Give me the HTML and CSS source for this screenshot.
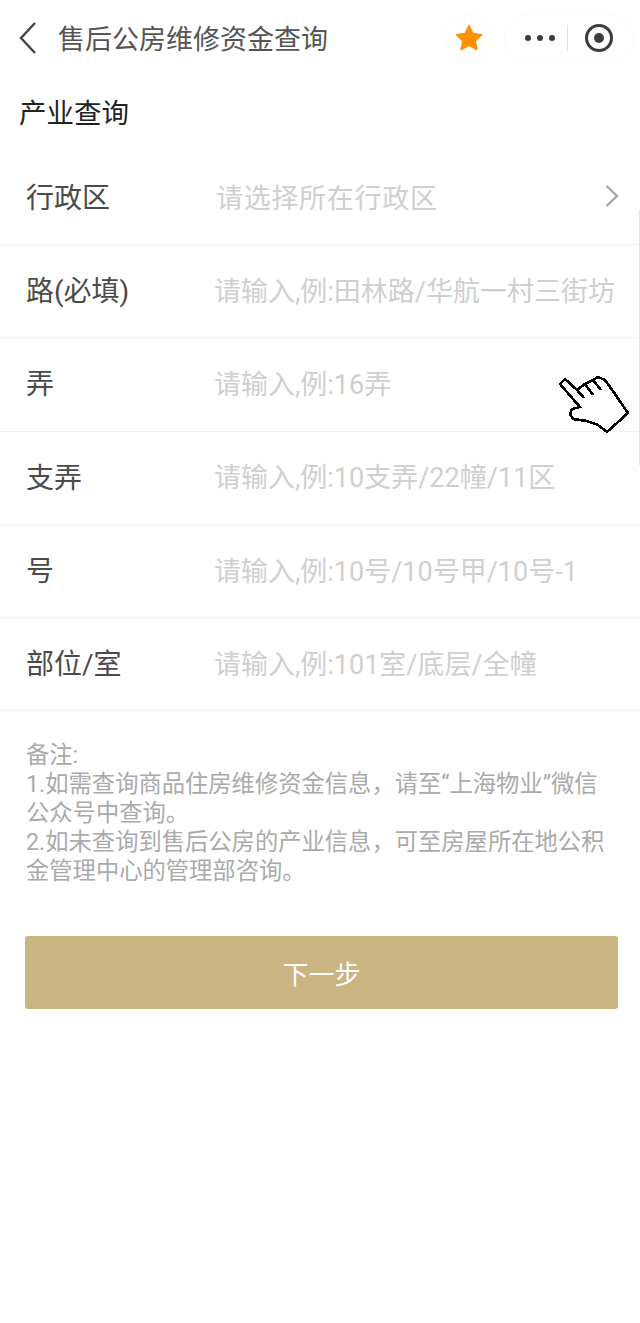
FILE: index.html
```html
<!DOCTYPE html>
<html lang="zh">
<head>
<meta charset="utf-8">
<title>售后公房维修资金查询</title>
<link rel="stylesheet" href="styles.css">
</head>
<body>
<div class="page">
  <header class="nav">
    <svg class="back" width="20" height="34" viewBox="0 0 20 34"><path d="M17 2 L3 17 L17 32" fill="none" stroke="#444" stroke-width="2.4"/></svg>
    <div class="nav-title">售后公房维修资金查询</div>
    <div class="star-pill">
      <svg width="30" height="30" viewBox="0 0 30 30"><path d="M15 2.5 L18.9 10.6 L27.6 11.8 L21.2 17.9 L22.9 26.6 L15 22.3 L7.1 26.6 L8.8 17.9 L2.4 11.8 L11.1 10.6 Z" fill="#ff9000" stroke="#ff9000" stroke-width="1.5" stroke-linejoin="round"/></svg>
    </div>
    <div class="capsule">
      <div class="dots"><span class="dot"></span><span class="dot"></span><span class="dot"></span></div>
      <div class="sep"></div>
      <div class="target"><span class="target-dot"></span></div>
    </div>
  </header>
  <h1 class="section-title">产业查询</h1>
  <section class="form">
    <div class="row first"><div class="label">行政区</div><div class="value select">请选择所在行政区</div>
      <svg class="chev" width="14" height="24" viewBox="0 0 14 24"><path d="M1.500 2 L12 12 L1.500 22" fill="none" stroke="#a8a8a8" stroke-width="2.4"/></svg></div>
    <div class="row"><div class="label">路(必填)</div><div class="value">请输入,例:田林路/华航一村三街坊</div></div>
    <div class="row"><div class="label">弄</div><div class="value">请输入,例:16弄</div></div>
    <div class="row"><div class="label">支弄</div><div class="value">请输入,例:10支弄/22幢/11区</div></div>
    <div class="row"><div class="label">号</div><div class="value">请输入,例:10号/10号甲/10号-1</div></div>
    <div class="row"><div class="label">部位/室</div><div class="value">请输入,例:101室/底层/全幢</div></div>
  </section>
  <div class="note">备注:<br>1.如需查询商品住房维修资金信息，请至“上海物业”微信公众号中查询。<br>2.如未查询到售后公房的产业信息，可至房屋所在地公积金管理中心的管理部咨询。</div>
  <button class="next" type="button">下一步</button>
  <div class="scrollbar"></div>
  <svg class="hand" width="72" height="60" viewBox="558 375 72 60"><path d="M560 384 L565 379 L577 390 L585 384 L593 380 L598 377 L605 380 L615 394 L619 400 L628 413 L607 432 L598 425 L587 421 L573 419 L570 414 L572 409 L580 407 Z" fill="#fff" stroke="#000" stroke-width="2.600" shape-rendering="crispEdges"/><path d="M577 390 L584 398 M585 384 L593 395 M593 380 L601 390" fill="none" stroke="#000" stroke-width="2.600" shape-rendering="crispEdges"/></svg>
</div>
</body>
</html>
```
FILE: styles.css
```css
* { box-sizing: border-box; }
html, body { margin: 0; padding: 0; background: #fff; }
body { font-family: Roboto, "Noto Sans CJK SC", sans-serif; }
.page { position: relative; width: 640px; height: 1323px; overflow: hidden; background: #fff; }
.nav { display: flex; align-items: center; height: 76px; padding-left: 18px; }
.back { flex: none; margin-right: 20px; }
.nav-title { flex: 1; padding-top: 4px; font-size: 27px; line-height: 40px; color: #555; white-space: nowrap; }
.star-pill { display: flex; align-items: center; justify-content: center; width: 48px; height: 48px; margin-right: 11px; margin-left: 1px; border: 1px solid #fbfbfb; border-radius: 50%; }
.capsule { display: flex; align-items: center; width: 130px; height: 48px; margin-right: 6px; border: 1px solid #fbfbfb; border-radius: 24px; }
.dots { display: flex; gap: 6px; margin-left: 20px; }
.dot { width: 6px; height: 6px; border-radius: 50%; background: #3c3c3c; }
.sep { width: 1px; height: 26px; margin-left: 12px; background: #e0e0e0; }
.target { display: flex; align-items: center; justify-content: center; width: 28px; height: 28px; margin-left: 17px; border: 3px solid #3c3c3c; border-radius: 50%; }
.target-dot { width: 10px; height: 10px; border-radius: 50%; background: #3c3c3c; }
.section-title { margin: 18px 0 0 19px; font-size: 27.500px; line-height: 40px; font-weight: 400; color: #222; }
.form { margin-top: 18px; }
.row { display: flex; align-items: center; height: 93.300px; padding-left: 26px; padding-bottom: 4px; border-bottom: 1px solid #f1f1f1; }
.row.first { height: 93px; }
.label { width: 188px; flex: none; font-size: 28px; color: #4a4a4a; white-space: nowrap; }
.value { flex: 1; font-size: 27px; color: #cfcfcf; white-space: nowrap; }
.value.select { padding-left: 2px; letter-spacing: 0.700px; }
.chev { flex: none; margin-right: 21px; }
.note { margin: 30px 26px 0; font-size: 23.300px; line-height: 29px; color: #aaaaaa; word-break: break-all; }
.next { display: block; width: 593px; height: 73px; margin: 50px 0 0 25px; border: 0; border-radius: 3px; background: #cab582; color: #fff; font-family: inherit; font-size: 26px; }
.scrollbar { position: absolute; right: 0; top: 210px; width: 1px; height: 255px; background: #e4e4e4; }
.hand { position: absolute; left: 558px; top: 375px; }
```
